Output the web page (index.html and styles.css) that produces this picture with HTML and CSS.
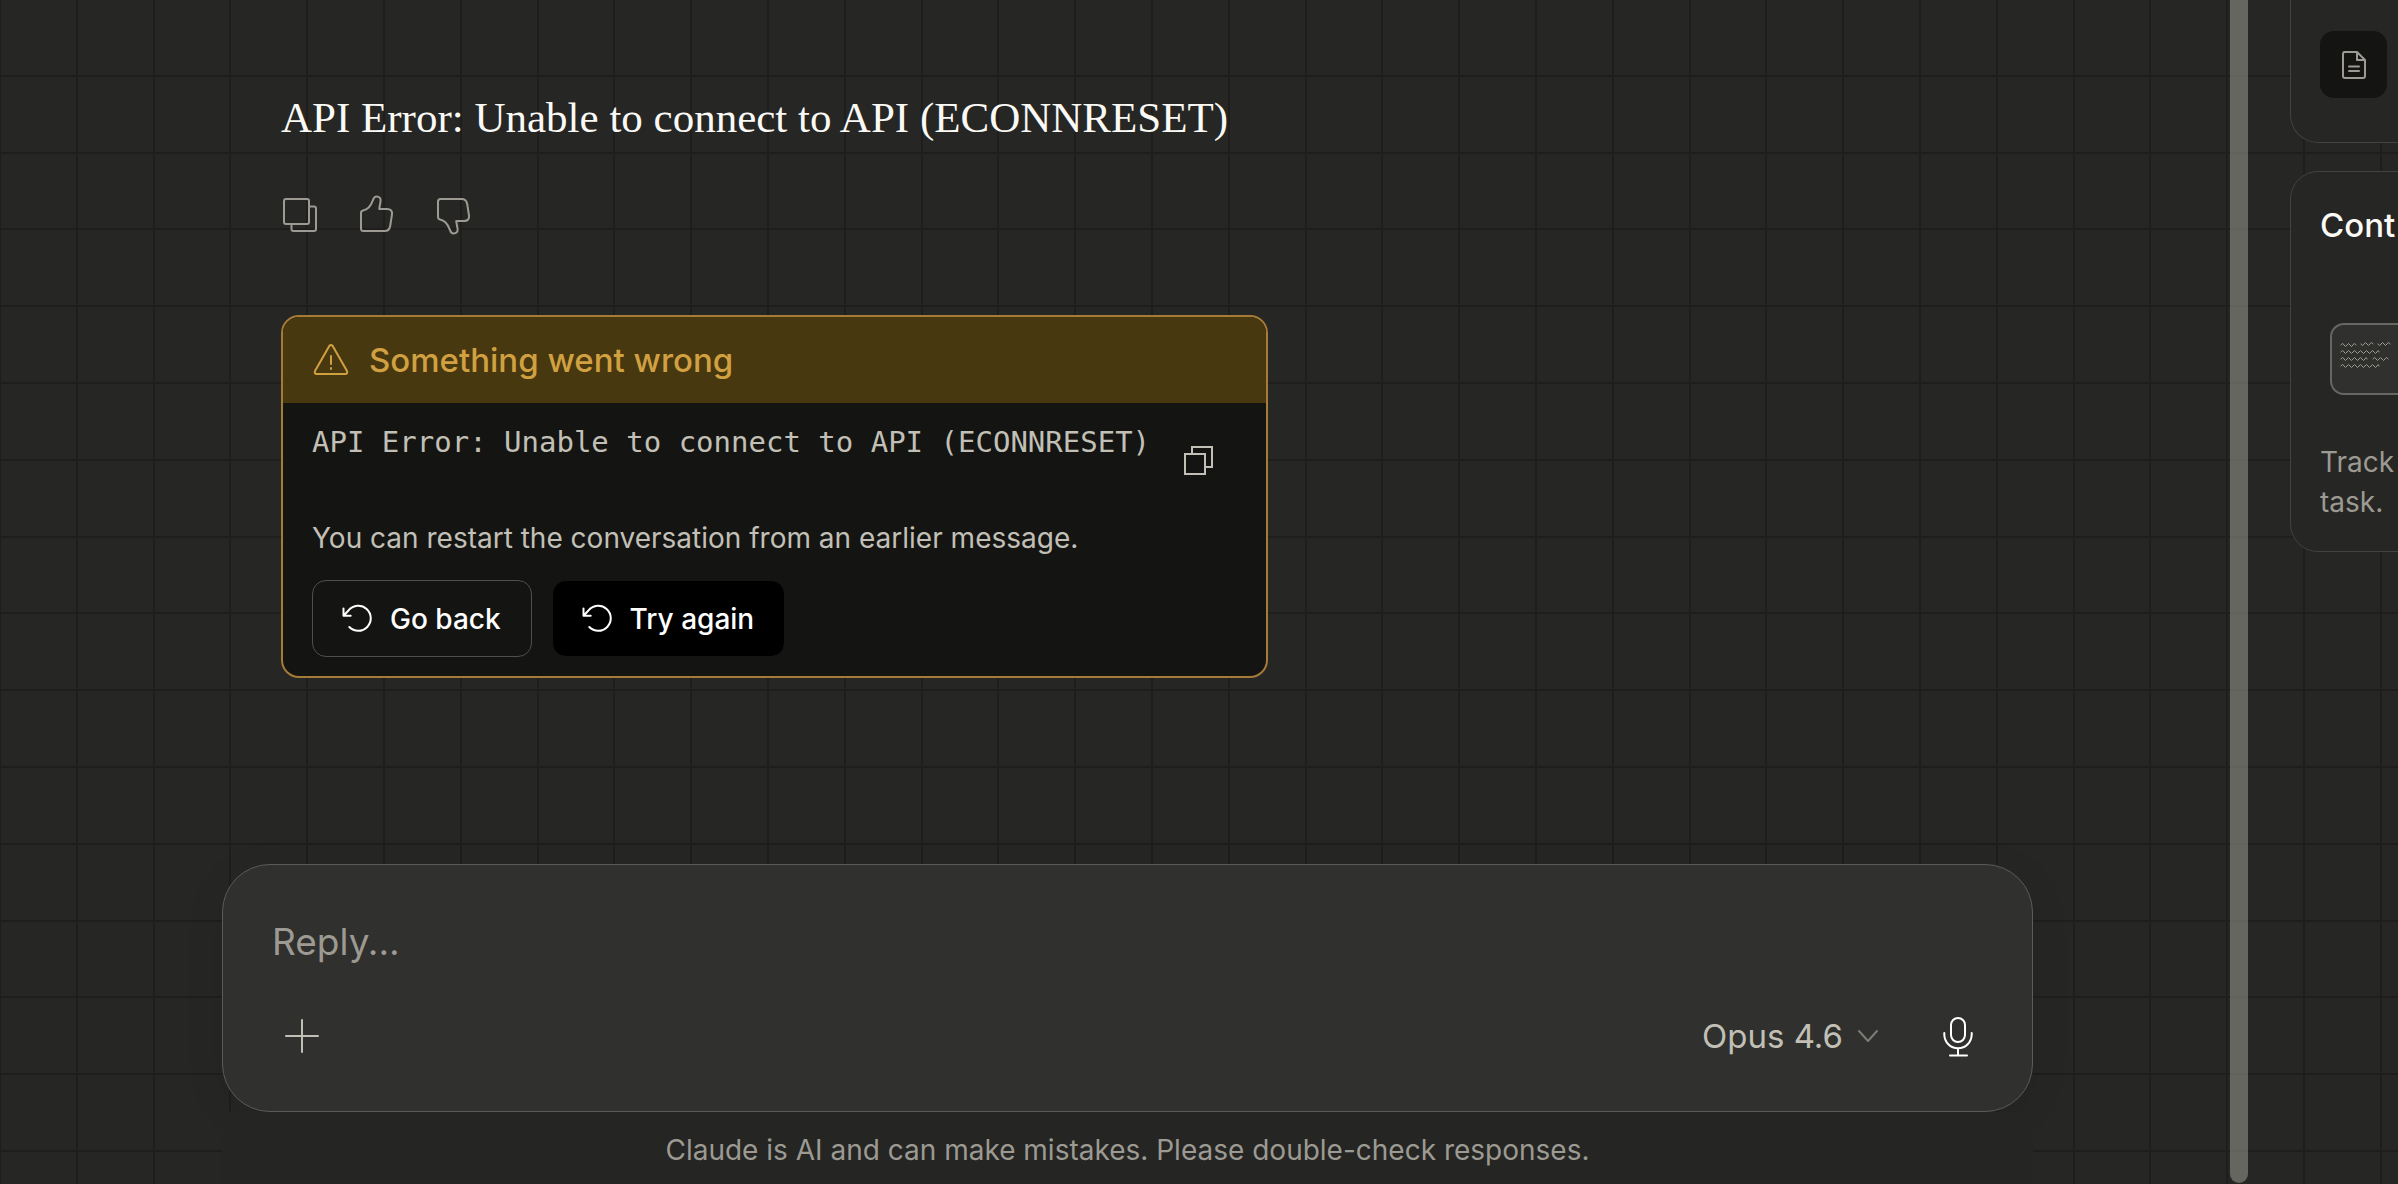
FILE: index.html
```
<!DOCTYPE html>
<html lang="en">

<head>
    <meta charset="utf-8">
    <title>Claude</title>
    <link rel="stylesheet" href="styles.css">
</head>

<body>
    <main class="chat">
        <div class="thread">
            <p class="reply">API Error: Unable to connect to API (ECONNRESET)</p>

            <div class="actions">
                <button type="button" aria-label="Copy">
                    <svg width="40" height="40" viewBox="0 0 40 40">
                        <rect x="4" y="4" width="25" height="25" rx="2" />
                        <path d="M29 11.5h5q2 0 2 2V34q0 2-2 2H13.5q-2 0-2-2v-5" />
                    </svg>
                </button>
                <button type="button" aria-label="Good response">
                    <svg width="40" height="40" viewBox="0 0 40 40">
                        <path d="M4 18q0-2 2-2.4c5-1 8-5 9.800-10.2c.8-2.6 1.800-3.800 3.800-3.800c3 0 4.400 2 4 4.400l-1.400 8h8c3.500 0 5.300 2.200 4.800 5.400l-1.800 11.600c-.6 3.400-2.600 5-5.600 5H6.500q-2.500 0-2.500-2.500z" />
                    </svg>
                </button>
                <button type="button" aria-label="Bad response">
                    <svg width="40" height="40" viewBox="0 0 40 40">
                        <path transform="matrix(1 0 0 -1 0 40)" d="M4 18q0-2 2-2.4c5-1 8-5 9.800-10.2c.8-2.6 1.800-3.800 3.800-3.800c3 0 4.400 2 4 4.400l-1.400 8h8c3.500 0 5.300 2.200 4.800 5.400l-1.800 11.600c-.6 3.400-2.600 5-5.600 5H6.500q-2.500 0-2.500-2.500z" />
                    </svg>
                </button>
            </div>

            <section class="error">
                <h2 class="error-title">
                    <svg width="36" height="36" viewBox="0 0 36 36">
                        <path d="M16.3 4q1.700-2 3.400 0L34 29q1 2.500-1.500 3H3.500Q1 31.500 2 29z" />
                        <path d="M18 14v8M18 26v1" />
                    </svg>
                    Something went wrong
                </h2>
                <div class="error-body">
                    <div class="error-detail">
                        <code>API Error: Unable to connect to API (ECONNRESET)</code>
                        <button type="button" class="copy" aria-label="Copy error">
                            <svg width="32" height="32" viewBox="0 0 32 32">
                                <rect x="3" y="10" width="20" height="20" />
                                <path d="M10 10V3h20v20h-7" />
                            </svg>
                        </button>
                    </div>
                    <p>You can restart the conversation from an earlier message.</p>
                    <div class="error-buttons">
                        <button type="button" class="btn">
                            <svg width="32" height="32" viewBox="0 0 32 32">
                                <path d="M3.5 5.5v7.2h7.2M3.5 12.7L8.700 7.2A12.5 12.5 0 1 1 9.300 24" />
                            </svg>
                            Go back
                        </button>
                        <button type="button" class="btn btn-primary">
                            <svg width="32" height="32" viewBox="0 0 32 32">
                                <path d="M3.5 5.5v7.2h7.2M3.5 12.7L8.700 7.2A12.5 12.5 0 1 1 9.300 24" />
                            </svg>
                            Try again
                        </button>
                    </div>
                </div>
            </section>
        </div>

        <div class="footer">
            <form class="composer">
                <input type="text" placeholder="Reply..." aria-label="Reply">
                <div class="toolbar">
                    <button type="button" class="tool" aria-label="Add">
                        <svg width="36" height="36" viewBox="0 0 36 36">
                            <path d="M18 2v32M2 18h32" />
                        </svg>
                    </button>
                    <div class="model">
                        <select aria-label="Model">
                            <option>Opus 4.6</option>
                        </select>
                        <svg width="20" height="20" viewBox="0 0 20 20">
                            <path d="M1 5l9 10l9-10" />
                        </svg>
                    </div>
                    <button type="button" class="tool mic" aria-label="Voice">
                        <svg width="44" height="44" viewBox="0 0 44 44">
                            <rect x="15" y="4" width="14" height="24" rx="7" />
                            <path d="M8.300 19v1.500a13.700 13.700 0 0 0 27.400 0V19M22 34.500v7M14 41.500h17" />
                        </svg>
                    </button>
                </div>
            </form>
            <p class="disclaimer">Claude is AI and can make mistakes. Please double-check responses.</p>
        </div>

        <div class="scrollbar"></div>
    </main>

    <aside class="side">
        <section class="card card-files">
            <div class="file">
                <svg width="30" height="34" viewBox="0 0 30 34">
                    <path d="M5 4h13l8 8v16q0 2-2 2H6q-2 0-2-2V6q0-2 2-2M18 4v8h8M10 18.500h10M10 23h10" />
                </svg>
            </div>
        </section>
        <section class="card">
            <h2>Cont</h2>
            <div class="page">
                <svg width="60" height="40" viewBox="0 0 60 40">
                    <path d="M1 6q1.500-3 3 0t3 0t3 0t3 0t3 0M21 5q1.500 3 3 0t3 0t3 0t3 0M38 5q1.500 3 3 0t3 0t3 0t3 0" />
                    <path d="M1 13q1.500-3 3 0t3 0t3 0t3 0t3 0t3 0t3 0t3 0t3 0t3 0t3 0t3 0t2 0" />
                    <path d="M1 20q1.500-3 3 0t3 0t3 0t3 0t3 0t3 0t3 0t3 0t2 0M33 20q1.500-3 3 0t3 0t3 0t3 0t3 0" />
                    <path d="M1 27q1.500-3 3 0t3 0t3 0t3 0t3 0t3 0t3 0t3 0t3 0t3 0t3 0t3 0t2 0" />
                </svg>
            </div>
            <p>Track<br>task.</p>
        </section>
    </aside>
</body>

</html>
```
FILE: styles.css
```
* {
    box-sizing: border-box;
}

body {
    margin: 0;
    height: 100vh;
    display: grid;
    grid-template-columns: 1fr 143px;
    overflow: hidden;
    color: #faf9f5;
    font-family: Inter, "Liberation Sans", sans-serif;
    font-size: 28px;
    line-height: 40px;
    background-color: #262624;
    /* five grid cells in each tile */
    background-image:
        repeating-linear-gradient(to right, #1f1e1d 0 2px, transparent 2px 20%),
        repeating-linear-gradient(to bottom, #1f1e1d 0 2px, transparent 2px 20%);
    background-size: 384px 384px;
    background-position: -1px -2px;
}

h2,
p {
    margin: 0;
}

h2 {
    font-size: 33px;
    font-weight: 500;
    line-height: 44px;
}

button,
input,
select {
    margin: 0;
    padding: 0;
    border: none;
    background: none;
    color: inherit;
    font: inherit;
}

button {
    display: flex;
    align-items: center;
    justify-content: center;
    cursor: pointer;
}

svg {
    display: block;
    flex: none;
    fill: none;
    stroke: currentColor;
    stroke-width: 2;
    stroke-linecap: round;
    stroke-linejoin: round;
}

.chat {
    position: relative;
    display: flex;
    flex-direction: column;
    min-width: 0;
}

.thread,
.footer {
    width: 100%;
    max-width: 1811px;
    margin: 0 auto;
}

.thread {
    flex: 1;
    padding: 88px 59px 0;
}

.reply {
    font-family: "Liberation Serif", serif;
    font-size: 43px;
    line-height: 60px;
}

.actions {
    display: flex;
    gap: 37px;
    margin: 47px 0 80px -1px;
    color: #9c9a92;
}

.error {
    max-width: 987px;
    border: 2px solid #a67a37;
    border-radius: 18px;
    background-color: #141413;
    overflow: hidden;
}

.error-title {
    display: flex;
    align-items: center;
    gap: 20px;
    height: 86px;
    padding: 0 30px;
    background-color: #483810;
    color: #d1a041;
}

.error-body {
    padding: 19px 30px 19px 29px;
    color: #c2c0b6;
}

.error-detail {
    display: flex;
    justify-content: space-between;
    margin-bottom: 20px;
}

.error-detail code {
    font-family: "DejaVu Sans Mono", monospace;
    font-size: 29px;
}

.copy {
    width: 76px;
    height: 76px;
}

.copy svg {
    stroke-linejoin: miter;
}

.error-buttons {
    display: flex;
    gap: 20px;
    margin-top: 22px;
}

.btn {
    height: 77px;
    gap: 18px;
    padding: 0 30px 0 27px;
    border: 1px solid #4f4f4c;
    border-radius: 14px;
    color: #fff;
    font-weight: 500;
}

.btn-primary {
    border-color: #141413;
    background-color: #000;
}

.composer {
    padding: 52px 44px 45px 49px;
    border: 1px solid #5b5b58;
    border-radius: 48px;
    background-color: #30302e;
    box-shadow: 0 8px 40px rgba(0, 0, 0, 0.08);
}

.composer input {
    display: block;
    width: 100%;
    height: 48px;
    font-size: 37px;
    outline: none;
}

.composer input::placeholder {
    color: #9c9a92;
    opacity: 1;
}

.toolbar {
    display: flex;
    align-items: center;
    margin-top: 41px;
    color: #c2c0b6;
}

.tool {
    width: 60px;
    height: 60px;
}

.mic {
    color: #fff;
}

.model {
    display: flex;
    align-items: center;
    gap: 15px;
    margin: 0 50px 0 auto;
    font-size: 33px;
}

.model select {
    appearance: none;
    height: 60px;
}

.model svg {
    color: #7c7b76;
}

.disclaimer {
    padding: 18px 0 14px;
    background-color: #252523;
    color: #9c9a92;
    text-align: center;
}

.scrollbar {
    position: absolute;
    top: -20px;
    right: 7px;
    bottom: 1px;
    width: 18px;
    border-radius: 9px;
    background-color: rgba(135, 135, 128, 0.66);
}

.side {
    padding-left: 35px;
    overflow: hidden;
}

.card {
    width: 560px;
    padding: 31px 29px 29px;
    border: 1px solid #42423f;
    border-radius: 28px;
    background-color: #262624;
}

.card p {
    margin-top: 47px;
    color: #9c9a92;
}

.card-files {
    margin-bottom: 28px;
    padding-bottom: 44px;
    border-top: none;
    border-radius: 0 0 28px 28px;
}

.file {
    display: grid;
    place-items: center;
    width: 67px;
    height: 67px;
    border-radius: 14px;
    background-color: #141413;
    color: #9c9a92;
}

.page {
    width: 96px;
    height: 72px;
    margin: 76px 0 0 10px;
    padding: 14px 8px;
    border: 2px solid #666663;
    border-radius: 14px;
    background-color: #30302e;
    color: #9c9a92;
}

.page svg {
    stroke-width: 1;
}
```
